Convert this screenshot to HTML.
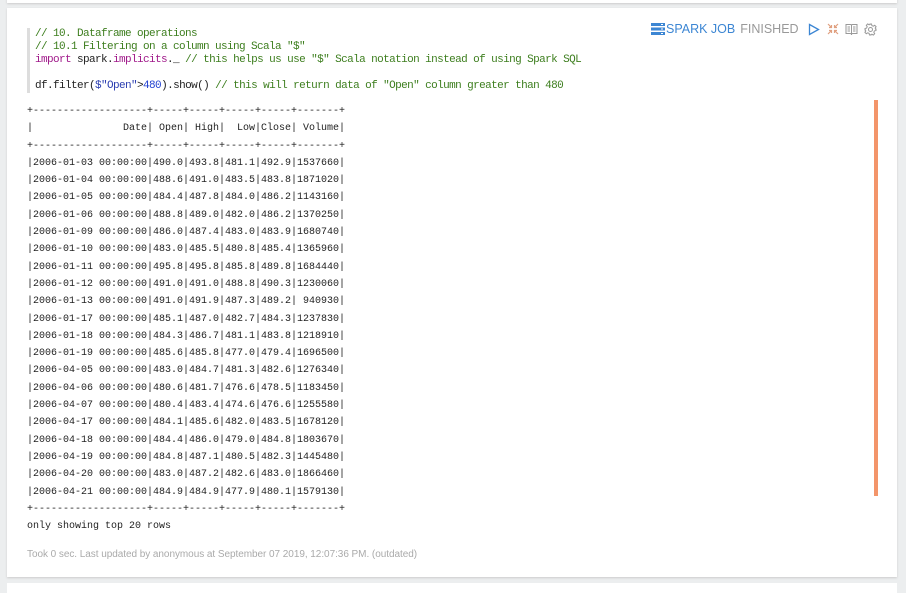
<!DOCTYPE html>
<html><head><style>
body{margin:0;width:906px;height:585px;background:#eceeef;position:relative;overflow:hidden;font-family:"Liberation Sans",sans-serif}
.top{position:absolute;left:7px;top:-10px;width:890px;height:13px;background:#fff;box-shadow:0 1px 2px #ccc}
.card{position:absolute;left:7px;top:8px;width:890px;height:569px;background:#fff;box-shadow:0 1px 2px #ccc}
.bot{position:absolute;left:7px;top:583px;width:890px;height:10px;background:#fff}
.code{position:absolute;left:20px;top:20px;border-left:3px solid #ddd;padding-left:5px;font-family:"Liberation Mono",monospace;font-size:11px;letter-spacing:-0.6px;line-height:13px;color:#222;white-space:pre}
.c{color:#3d7e1e}.k{color:#a0198a}.s{color:#2a3db0}.n{color:#1f3fd0}
.out{position:absolute;left:20px;top:95px;font-family:"Liberation Mono",monospace;font-size:10px;line-height:17.3px;color:#222;white-space:pre}
.bar{position:absolute;left:867px;top:92px;width:4px;height:396px;background:#f3956a}
.foot{position:absolute;left:20px;top:541px;font-size:10px;letter-spacing:-0.05px;color:#aaa}
.hdr{position:absolute;left:644px;top:14px;font-size:12.5px;color:#999;display:flex;align-items:center}
.hdr .sj{color:#3c86d3}
</style></head><body>
<div class="top"></div>
<div class="card">
<div class="code"><span class="c">// 10. Dataframe operations
// 10.1 Filtering on a column using Scala "$"</span>
<span class="k">import</span> spark.<span class="k">implicits</span>._ <span class="c">// this helps us use "$" Scala notation instead of using Spark SQL</span>

df.filter(<span class="s">$"Open"</span>&gt;<span class="n">480</span>).show() <span class="c">// this will return data of "Open" column greater than 480</span></div>
<div class="hdr">
<svg width="14" height="12" viewBox="0 0 14 12"><rect x="0" y="0" width="14" height="3" fill="#3c86d3"/><rect x="0" y="4.5" width="14" height="3" fill="#3c86d3"/><rect x="0" y="9" width="14" height="3" fill="#3c86d3"/><rect x="10" y="1" width="2" height="1" fill="#fff"/><rect x="10" y="5.5" width="2" height="1" fill="#fff"/><rect x="10" y="10" width="2" height="1" fill="#fff"/></svg>
<span class="sj" style="margin-left:1px">SPARK JOB</span><span style="margin-left:5px">FINISHED</span>
<svg style="margin-left:9px" width="12" height="13" viewBox="0 0 12 13"><path d="M1.5 1.5 L10.5 6.5 L1.5 11.5Z" fill="none" stroke="#3c86d3" stroke-width="1.3"/></svg>
<svg style="margin-left:7px" width="12" height="12" viewBox="0 0 12 12" stroke="#e0a080" stroke-width="1.2" fill="none"><path d="M1 1L4.5 4.5M4.5 2V4.5H2M11 1L7.5 4.5M7.5 2V4.5H10M1 11L4.5 7.5M4.5 10V7.5H2M11 11L7.5 7.5M7.5 10V7.5H10"/></svg>
<svg style="margin-left:6px" width="13" height="12" viewBox="0 0 13 12" stroke="#999" stroke-width="1" fill="none"><path d="M1 1.5H5.5Q6.5 1.5 6.5 2.5V11Q6 10.5 5 10.5H1Z M12 1.5H7.5Q6.5 1.5 6.5 2.5V11Q7 10.5 8 10.5H12Z M2.5 4H5M2.5 6H5M2.5 8H5M8 4H10.5M8 6H10.5M8 8H10.5"/></svg>
<svg style="margin-left:6px" width="13" height="13" viewBox="0 0 13 13" stroke="#999" stroke-width="1" fill="none"><circle cx="6.5" cy="6.5" r="2"/><path d="M5.5 1h2l.4 1.6 1.4.6 1.4-.9 1.4 1.4-.9 1.4.6 1.4L12 7.5v-2 2l-1.6.4-.6 1.4.9 1.4-1.4 1.4-1.4-.9-1.4.6L7.5 12h-2l-.4-1.6-1.4-.6-1.4.9-1.4-1.4.9-1.4-.6-1.4L1 7.5v-2l1.6-.4.6-1.4-.9-1.4 1.4-1.4 1.4.9 1.4-.6z"/></svg>
</div>
<div class="out">+-------------------+-----+-----+-----+-----+-------+
|               Date| Open| High|  Low|Close| Volume|
+-------------------+-----+-----+-----+-----+-------+
|2006-01-03 00:00:00|490.0|493.8|481.1|492.9|1537660|
|2006-01-04 00:00:00|488.6|491.0|483.5|483.8|1871020|
|2006-01-05 00:00:00|484.4|487.8|484.0|486.2|1143160|
|2006-01-06 00:00:00|488.8|489.0|482.0|486.2|1370250|
|2006-01-09 00:00:00|486.0|487.4|483.0|483.9|1680740|
|2006-01-10 00:00:00|483.0|485.5|480.8|485.4|1365960|
|2006-01-11 00:00:00|495.8|495.8|485.8|489.8|1684440|
|2006-01-12 00:00:00|491.0|491.0|488.8|490.3|1230060|
|2006-01-13 00:00:00|491.0|491.9|487.3|489.2| 940930|
|2006-01-17 00:00:00|485.1|487.0|482.7|484.3|1237830|
|2006-01-18 00:00:00|484.3|486.7|481.1|483.8|1218910|
|2006-01-19 00:00:00|485.6|485.8|477.0|479.4|1696500|
|2006-04-05 00:00:00|483.0|484.7|481.3|482.6|1276340|
|2006-04-06 00:00:00|480.6|481.7|476.6|478.5|1183450|
|2006-04-07 00:00:00|480.4|483.4|474.6|476.6|1255580|
|2006-04-17 00:00:00|484.1|485.6|482.0|483.5|1678120|
|2006-04-18 00:00:00|484.4|486.0|479.0|484.8|1803670|
|2006-04-19 00:00:00|484.8|487.1|480.5|482.3|1445480|
|2006-04-20 00:00:00|483.0|487.2|482.6|483.0|1866460|
|2006-04-21 00:00:00|484.9|484.9|477.9|480.1|1579130|
+-------------------+-----+-----+-----+-----+-------+
only showing top 20 rows</div>
<div class="bar"></div>
<div class="foot">Took 0 sec. Last updated by anonymous at September 07 2019, 12:07:36 PM. (outdated)</div>
</div>
<div class="bot"></div>
</body></html>
